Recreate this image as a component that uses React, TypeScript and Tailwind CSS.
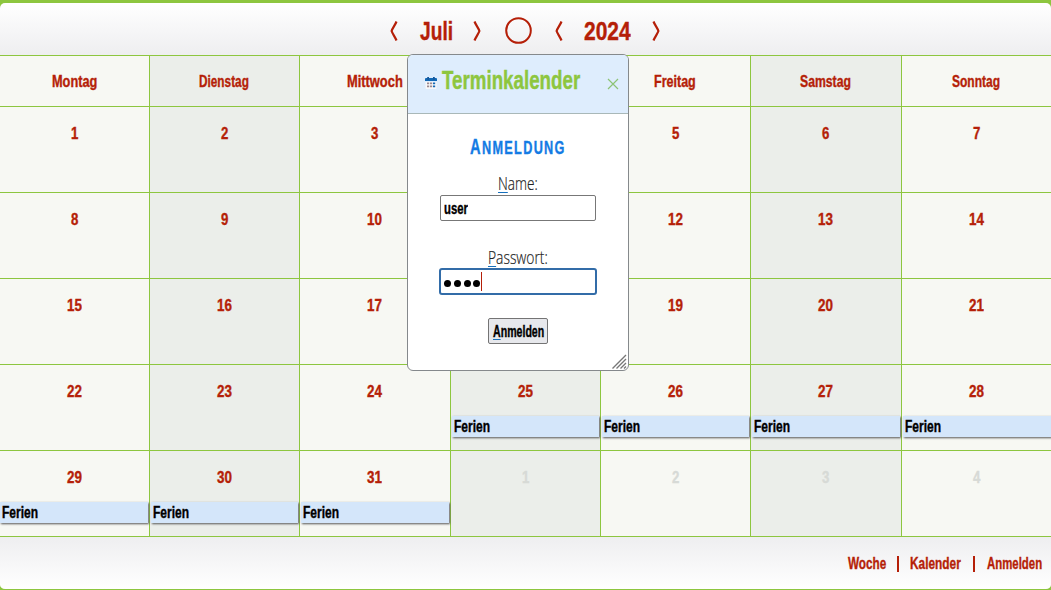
import { useLayoutEffect, useRef } from 'react';

const display = "font-['Liberation_Sans_Narrow','Liberation_Sans',sans-serif] font-bold [-webkit-text-stroke:0.4px_currentColor]";
const light = "font-['Open_Sans','Noto_Sans',sans-serif] font-light [-webkit-text-stroke:0.2px_currentColor]";

// Condenses a line of text horizontally until it fills the given width.
function Condensed({ children, width, className = '' }: { children: React.ReactNode; width: number; className?: string }) {
  const ref = useRef<HTMLSpanElement>(null);
  useLayoutEffect(() => {
    const el = ref.current;
    if (el) el.style.transform = `scaleX(${width / el.offsetWidth})`;
  }, [width]);
  return (
    <span className={`flex shrink-0 whitespace-nowrap ${className}`} style={{ width }}>
      <span ref={ref} className="block w-max shrink-0 origin-left">{children}</span>
    </span>
  );
}

function Angle({ flip = false }: { flip?: boolean }) {
  return (
    <svg width="8" height="20" viewBox="0 0 8 20" className={flip ? '-scale-x-100' : ''} fill="none" stroke="#b51f08" strokeWidth="2.2">
      <path d="M6.5 .5 C5.2 4 2.6 7 1.6 10 C2.6 13 5.2 16 6.5 19.5" />
    </svg>
  );
}

// Thursday's upper cells are left empty beneath the login dialog.
const days: [string, number][] = [['Montag', 45], ['Dienstag', 50], ['Mittwoch', 56], ['', 0], ['Freitag', 42], ['Samstag', 51], ['Sonntag', 48]];
const covered = [4, 11, 18];
const cells = Array.from({ length: 35 }, (_, i) => i + 1);
const columns = 'grid grid-cols-[150px_150px_151px_150px_150px_151px_149px]';

function tone(col: number) {
  return `${col % 2 ? 'bg-[#ebeeea]' : 'bg-[#f7f8f3]'} ${col < 6 ? 'border-r' : ''} border-b border-[#8dc63f]`;
}

function CalendarIcon() {
  return (
    <svg width="12" height="12" viewBox="0 0 12 12">
      <path d="M.5 5H11.5V11Q11.5 12 10.5 12H1.5Q.5 12 .5 11Z" fill="#f8f8fa" />
      <path d="M0 2Q0 1 1 1H11Q12 1 12 2V4H0Z" fill="#1268b5" />
      <path d="M2.2 0H4V3H2.2ZM8 0H9.8V3H8Z" fill="#17599c" />
      <path d="M2 5.6H4.2V7.2H2ZM5 5.6H7.2V7.2H5ZM2 8.6H4.2V10.2H2ZM5 8.6H7.2V10.2H5Z" fill="#9a8a91" />
      <path d="M8 5.6H10.2V7.2H8ZM8 8.6H10.2V10.2H8Z" fill="#1268b5" />
    </svg>
  );
}

function LoginDialog() {
  return (
    <section className="absolute left-[407px] top-[54px] flex h-[317px] w-[222px] flex-col overflow-hidden rounded-[6px] border border-[#85898c] bg-white">
      <header className="flex h-[59px] shrink-0 items-start border-b border-[#a9b8b8] bg-[#deedfd] pl-[17px]">
        <div className="mt-[22px]"><CalendarIcon /></div>
        <Condensed width={138} className={`${display} ml-[5px] mt-[12px] text-[25px] leading-[26px] text-[#8dc63f]`}>Terminkalender</Condensed>
        <svg className="ml-[27px] mt-[23px]" width="12" height="12" viewBox="0 0 12 12" fill="none" stroke="#8dc375" strokeWidth="1.2">
          <path d="M1 1L11 11M11 1L1 11" />
        </svg>
      </header>
      <form className="flex flex-col items-center">
        <Condensed width={96} className={`${display} mt-[21px] text-[22px] leading-[24px] text-[#147be4]`}>
          <span className="tracking-[2px]">A<span className="text-[19px]">NMELDUNG</span></span>
        </Condensed>
        <Condensed width={40} className={`${light} mt-[12px] text-[18px] leading-[22px] text-[#222]`}>
          <span className="underline decoration-[#1670bd] decoration-1 underline-offset-[2px]">N</span>ame:
        </Condensed>
        <div className="mt-px flex h-[26px] w-[156px] items-center rounded-[2px] border border-[#777] pl-[3px] pt-[2px]">
          <Condensed width={24} className={`${display} text-[16px] leading-[20px]`}>user</Condensed>
        </div>
        <Condensed width={60} className={`${light} mt-[25px] text-[18px] leading-[22px] text-[#222]`}>
          <span className="underline decoration-[#1670bd] decoration-1 underline-offset-[2px]">P</span>asswort:
        </Condensed>
        <div className="flex h-[27px] w-[158px] items-center rounded-[3px] border-2 border-[#326ca8] pl-[3px]">
          <div className="mt-[3px] flex gap-[2.8px]">
            {[0, 1, 2, 3].map((n) => <i key={n} className="size-[7px] rounded-full bg-black" />)}
          </div>
          <i className="ml-px h-[19px] w-px bg-[#b51f08]" />
        </div>
        <button type="button" className="mt-[23px] flex h-[26px] w-[60px] items-center justify-center rounded-[2px] border border-[#747474] bg-[#e7e8ec] pt-[2px]">
          <Condensed width={51} className={`${display} text-[16px] leading-[20px]`}>
            <span className="underline decoration-[#1670bd] decoration-1 underline-offset-[2px]">A</span>nmelden
          </Condensed>
        </button>
      </form>
      <svg className="mt-auto self-end" width="16" height="16" viewBox="0 0 16 16" stroke="#777" strokeWidth="1.4">
        <path d="M.5 14.5L14 1M4.5 14.5L14 5M8.5 14.5L14 9M12 14.5L14 12.5" />
      </svg>
    </section>
  );
}

export default function App() {
  return (
    <main className="relative h-[590px] w-[1051px] overflow-hidden bg-[#8dc63f] pt-[3px] text-black">
      <div className="flex h-[587px] flex-col overflow-hidden rounded-[5px] border-b border-[#8dc63f]">
        <header className="flex h-[53px] shrink-0 items-center border-b border-[#8dc63f] bg-linear-to-b from-white to-[#eeeef0] pl-[390px] pt-[3px]">
          <Angle />
          <Condensed width={33} className={`${display} ml-[22px] text-[25px] leading-[28px] text-[#b51f08]`}>Juli</Condensed>
          <div className="ml-[20px]"><Angle flip /></div>
          <svg className="ml-[24px]" width="27" height="27" viewBox="0 0 27 27" fill="none" stroke="#b51f08" strokeWidth="2"><circle cx="13.5" cy="13.5" r="12.3" /></svg>
          <div className="ml-[23px]"><Angle /></div>
          <Condensed width={47} className={`${display} ml-[21px] text-[25px] leading-[28px] text-[#b51f08]`}>2024</Condensed>
          <div className="ml-[21px]"><Angle flip /></div>
        </header>
        <div className={`${columns} h-[51px] shrink-0`}>
          {days.map(([name, width], i) => (
            <div key={i} className={`${tone(i)} flex items-center justify-center pr-px pt-[2px]`}>
              {name && <Condensed width={width} className={`${display} text-[17px] leading-[20px] text-[#b51f08]`}>{name}</Condensed>}
            </div>
          ))}
        </div>
        <div className={`${columns} shrink-0 auto-rows-[86px]`}>
          {cells.map((n) => (
            <div key={n} className={`${tone((n - 1) % 7)} flex flex-col pt-[17px]`}>
              {!covered.includes(n) && (
                <Condensed
                  width={n > 9 && n < 32 ? 15 : 7}
                  className={`${display} mr-px self-center text-[17px] leading-[20px] ${n > 31 ? 'text-[#d7dad6]' : 'text-[#b51f08]'}`}
                >
                  {n > 31 ? n - 31 : n}
                </Condensed>
              )}
              {n >= 25 && n <= 31 && (
                <div className={`mt-[14px] flex h-[21px] items-center bg-[#d4e6fa] pt-px shadow-[1px_1px_2px_#555] ${n === 29 ? 'pl-[2px]' : 'ml-px pl-[1.5px]'} ${n === 28 ? '' : 'mr-px'}`}>
                  <Condensed width={36} className={`${display} text-[16px] leading-[20px]`}>Ferien</Condensed>
                </div>
              )}
            </div>
          ))}
        </div>
        <footer className={`${display} flex grow items-center justify-end bg-linear-to-b from-[#eeeef0] to-white pr-[9px] pt-[2px] text-[17px] leading-[20px] text-[#b51f08]`}>
          <Condensed width={38}>Woche</Condensed>
          <i className="mx-[11px] h-[16px] w-[2px] bg-[#b51f08]" />
          <Condensed width={51}>Kalender</Condensed>
          <i className="mx-[12px] h-[16px] w-[2px] bg-[#b51f08]" />
          <Condensed width={55}>Anmelden</Condensed>
        </footer>
      </div>
      <LoginDialog />
    </main>
  );
}
